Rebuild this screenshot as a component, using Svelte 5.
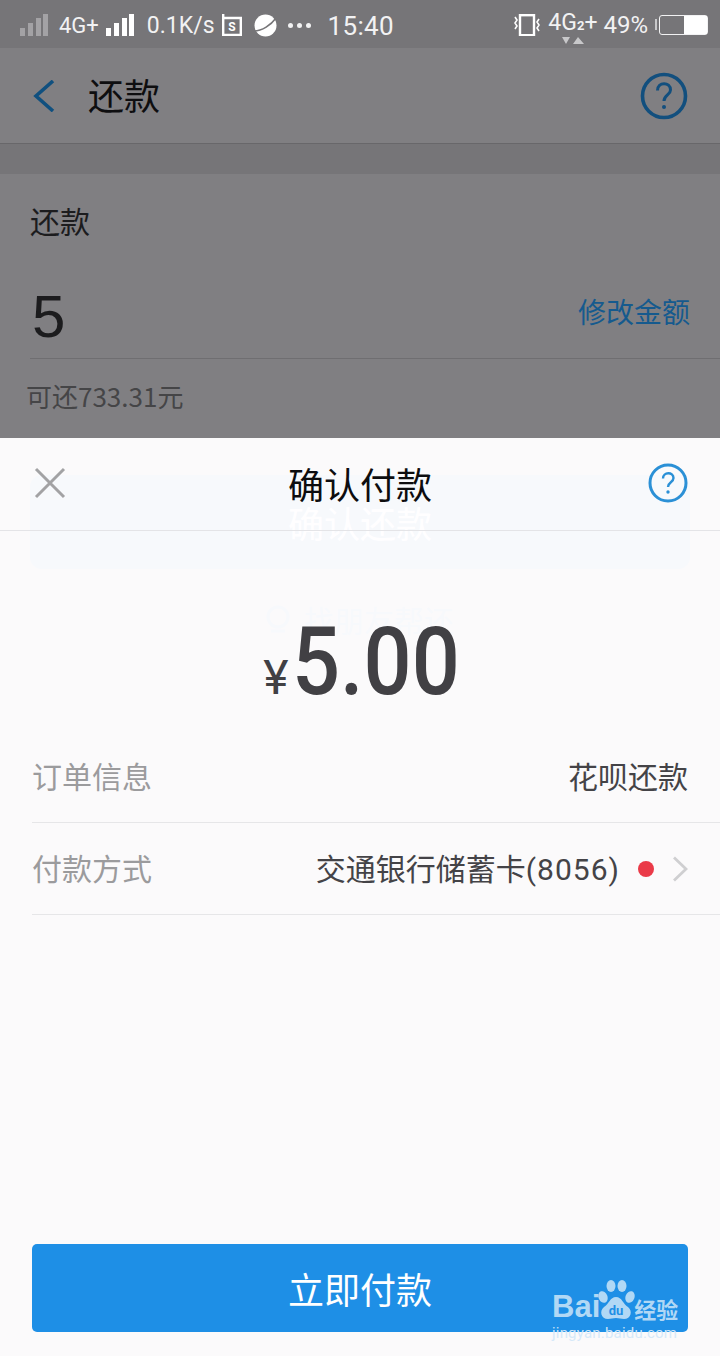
<script lang="ts">
	const rows = [
		{ label: '订单信息', value: '花呗还款', tail: '', pay: false },
		{ label: '付款方式', value: '交通银行储蓄卡', tail: '(8056)', pay: true }
	];
</script>

<div class="screen">
	<!-- dimmed page under the sheet -->
	<div class="page">
		<header class="status">
			<svg class="bars" width="28" height="22" viewBox="0 0 28 22" fill="#a3a2a5">
				<rect x="0" y="14" width="5" height="8" /><rect x="8" y="9" width="5" height="13" /><rect x="16" y="4" width="5" height="18" /><rect x="23" y="0" width="5" height="22" />
			</svg>
			<span class="net">4G+</span>
			<svg class="bars2" width="28" height="22" viewBox="0 0 28 22" fill="#fff">
				<rect x="0" y="14" width="5" height="8" /><rect x="8" y="9" width="5" height="13" /><rect x="16" y="4" width="5" height="18" /><rect x="23" y="0" width="5" height="22" />
			</svg>
			<span class="speed">0.1K/s</span>
			<svg class="sim" width="20" height="22" viewBox="0 0 20 22" fill="none" stroke="#fff" stroke-width="2.4">
				<path d="M1.2 0v21h17.6V4H1.2" />
				<text x="10" y="17" text-anchor="middle" font-size="12" font-family="Roboto, sans-serif" font-weight="700" fill="#fff" stroke="none">S</text>
			</svg>
			<svg class="planet" width="23" height="23" viewBox="0 0 23 23">
				<circle cx="11.5" cy="11.5" r="11" fill="#fff" />
				<path d="M0 17C8 17 17 11 22 4" fill="none" stroke="#767578" stroke-width="1.6" />
			</svg>
			<span class="dots"><i></i><i></i><i></i></span>
			<span class="clock">15:40</span>
			<div class="status-right">
				<svg width="28" height="22" viewBox="0 0 28 22" fill="none" stroke="#fff">
					<rect x="7" y="1.2" width="14" height="20" stroke-width="2.4" />
					<path d="M2 3l2 3-2 3 2 3-2 3 M26 5l-2 3 2 3-2 3 2 3" stroke-width="1.6" />
				</svg>
				<span class="dual">4G<small>2</small>+
					<svg class="arrows" width="24" height="7" viewBox="0 0 24 7" fill="#c8c8ca"><path d="M0 0h8L4 7zM11 7l5-7 6 7z" /></svg>
				</span>
				<span class="pct">49%</span>
				<span class="battery"><b></b></span>
			</div>
		</header>

		<nav class="topbar">
			<svg width="22" height="32" viewBox="0 0 22 32" fill="none" stroke="#10507f" stroke-width="3.6">
				<path d="M20 1L3 16l17 15" />
			</svg>
			<h1>还款</h1>
			<svg class="help" width="48" height="48" viewBox="0 0 48 48" fill="none" stroke="#124f7e" stroke-width="3.6">
				<circle cx="24" cy="24" r="21.5" />
				<path d="M17.5 18.5c0-9 13-9 13-.5 0 5-6.500 5-6.500 11" stroke-width="3" />
				<circle cx="24" cy="35" r="2" fill="#124f7e" stroke="none" />
			</svg>
		</nav>

		<section class="repay">
			<div class="repay-label">还款</div>
			<div class="amount-row">
				<span class="amount-num">5</span>
				<span class="edit">修改金额</span>
			</div>
			<div class="limit">可还733.31元</div>
			<div class="confirm">确认还款</div>
			<div class="friend">
				<svg width="24" height="28" viewBox="0 0 24 28" fill="none" stroke="#005ca8" stroke-width="3">
					<circle cx="12" cy="12" r="10" /><path d="M5 26h14" />
				</svg>
				<span>找朋友帮还</span>
			</div>
		</section>
	</div>

	<!-- payment sheet -->
	<div class="sheet">
		<div class="sheet-head">
			<svg class="close" width="32" height="32" viewBox="0 0 32 32" stroke="#a2a2a4" stroke-width="3" fill="none">
				<path d="M2 2l28 28M30 2L2 30" />
			</svg>
			<h2>确认付款</h2>
			<svg class="q" width="40" height="40" viewBox="0 0 40 40" fill="none" stroke="#2b90d6" stroke-width="3">
				<circle cx="20" cy="20" r="18" />
				<path d="M15 15.500c0-7 10.500-7 10.500-.5 0 4.500-5.500 4-5.500 9" stroke-width="2.400" />
				<circle cx="20" cy="29" r="1.700" fill="#2b90d6" stroke="none" />
			</svg>
		</div>

		<div class="price">
			<span class="yen">¥</span><span class="total">5.00</span>
		</div>

		<div class="rows">
			{#each rows as row}
				<div class="row">
					<span class="row-label">{row.label}</span>
					<span class="row-value">{row.value}<span class="tail">{row.tail}</span></span>
					{#if row.pay}
						<span class="dot"></span>
						<svg class="chev" width="16" height="26" viewBox="0 0 16 26" fill="none" stroke="#cfcfd1" stroke-width="2.800">
							<path d="M2 1.500L14 13 2 24.500" />
						</svg>
					{/if}
				</div>
			{/each}
		</div>

		<div class="foot">
			<button class="pay">立即付款</button>
		</div>
	</div>

	<!-- baidu jingyan watermark -->
	<div class="mark">
		<div class="mark-top">
			<span class="bai">Bai</span>
			<svg width="38" height="44" viewBox="0 0 38 44" fill="#b9dcf6">
				<ellipse cx="6" cy="18" rx="4.500" ry="6" transform="rotate(-20 6 18)" />
				<ellipse cx="14" cy="7" rx="4.500" ry="6" />
				<ellipse cx="25" cy="7" rx="4.500" ry="6" />
				<ellipse cx="33" cy="18" rx="4.500" ry="6" transform="rotate(20 33 18)" />
				<path d="M19 18c-6 0-7 7-12 10-5 4-3 12 4 12 3 0 5-1 8-1s5 1 8 1c7 0 9-8 4-12-5-3-6-10-12-10z" />
				<text x="19" y="36" text-anchor="middle" font-size="13" font-weight="700" font-family="Roboto, sans-serif" fill="#1e8fe6">du</text>
			</svg>
			<span class="jy">经验</span>
		</div>
		<div class="mark-url">jingyan.baidu.com</div>
	</div>
</div>

<style>
	:global(body) {
		margin: 0;
	}
	.screen {
		position: relative;
		width: 720px;
		height: 1356px;
		overflow: hidden;
		font-family: "Noto Sans CJK SC", Roboto, sans-serif;
		background: #807f82;
	}

	/* status bar */
	.status {
		height: 48px;
		box-sizing: border-box;
		padding: 2px 12px 0 20px;
		display: flex;
		align-items: center;
		background: #767578;
		color: #f2f2f3;
		font-family: Roboto, sans-serif;
	}
	.net {
		margin-left: 11px;
		font-size: 22px;
	}
	.bars2 {
		margin-left: 7px;
	}
	.speed {
		margin-left: 13px;
		font-size: 23px;
	}
	.sim {
		margin-left: 7px;
	}
	.planet {
		margin-left: 12px;
	}
	.dots {
		margin-left: 11px;
		display: flex;
		gap: 4px;
	}
	.dots i {
		width: 5px;
		height: 5px;
		border-radius: 50%;
		background: #f2f2f3;
	}
	.clock {
		margin-left: 17px;
		font-size: 26px;
		letter-spacing: 0.3px;
		padding-top: 2px;
	}
	.status-right {
		margin-left: auto;
		display: flex;
		align-items: center;
	}
	.dual {
		position: relative;
		margin-left: 7px;
		font-size: 23px;
		margin-top: -6px;
	}
	.dual small {
		font-size: 13px;
		font-weight: 700;
	}
	.arrows {
		position: absolute;
		left: 14px;
		top: 28px;
	}
	.pct {
		margin-left: 6px;
		font-size: 24px;
	}
	.battery {
		position: relative;
		margin-left: 11px;
		width: 49px;
		height: 20px;
		box-sizing: border-box;
		border: 1.500px solid #f2f2f3;
		border-radius: 3px;
		display: flex;
		justify-content: flex-end;
	}
	.battery::before {
		content: "";
		position: absolute;
		left: -5px;
		top: 3px;
		width: 2px;
		height: 11px;
		background: #c8c8ca;
	}
	.battery b {
		width: 23px;
		background: #fff;
	}

	/* page behind */
	.topbar {
		height: 96px;
		box-sizing: border-box;
		padding: 0 33px;
		display: flex;
		align-items: center;
		border-bottom: 1px solid #68676a;
	}
	.topbar h1 {
		margin: 0 0 4px 33px;
		font-size: 36px;
		font-weight: 400;
		color: #0e0e10;
	}
	.help {
		margin-left: auto;
		margin-right: -1px;
	}
	.repay {
		margin-top: 30px;
		padding: 0 30px;
		background: #807f82;
	}
	.topbar + .repay {
		box-shadow: 0 -30px 0 #767578;
	}
	.repay-label {
		padding-top: 26px;
		font-size: 30px;
		line-height: 40px;
		color: #1c1c1e;
	}
	.amount-row {
		margin-right: -30px;
		padding: 42px 30px 6px 2px;
		display: flex;
		align-items: center;
		justify-content: space-between;
		border-bottom: 1px solid #6f6e71;
	}
	.amount-num {
		font-family: "Liberation Sans", sans-serif;
		font-size: 60px;
		line-height: 70px;
		color: #1c1c1e;
	}
	.edit {
		font-size: 28px;
		color: #155a8e;
		margin-bottom: 12px;
	}
	.limit {
		margin: 17px 0 0 -4px;
		font-size: 26px;
		line-height: 40px;
		color: #454547;
	}
	.confirm {
		margin-top: 59px;
		height: 94px;
		border-radius: 12px;
		background: #005ca8;
		color: #fff;
		font-size: 36px;
		text-align: center;
		line-height: 94px;
	}
	.friend {
		margin-top: 30px;
		display: flex;
		justify-content: center;
		align-items: center;
		gap: 14px;
		font-size: 30px;
		line-height: 40px;
		color: #005ca8;
	}

	/* sheet */
	.sheet {
		position: absolute;
		inset: 438px 0 0 0;
		display: flex;
		flex-direction: column;
		background: rgba(255, 254, 255, 0.97);
	}
	.sheet-head {
		height: 93px;
		box-sizing: border-box;
		padding: 0 32px 0 34px;
		display: flex;
		align-items: center;
		justify-content: space-between;
		border-bottom: 1px solid #e4e4e7;
	}
	.close {
		margin-bottom: 2px;
	}
	.sheet-head h2 {
		margin: 0 0 2px 6px;
		font-size: 36px;
		font-weight: 400;
		color: #0d0d0f;
	}
	.q {
		margin-bottom: 2px;
	}
	.price {
		height: 123px;
		padding-top: 77px;
		padding-left: 4px;
		display: flex;
		justify-content: center;
		align-items: baseline;
		color: #414044;
		font-family: Roboto, sans-serif;
	}
	.yen {
		font-size: 48px;
		margin-right: 4px;
	}
	.total {
		font-size: 94px;
		font-weight: 500;
		line-height: 108px;
		display: inline-block;
		transform: scaleX(0.9);
		transform-origin: left center;
		margin-right: -18px;
	}
	.rows {
		padding-left: 32px;
	}
	.row {
		height: 92px;
		box-sizing: border-box;
		padding-right: 32px;
		display: flex;
		align-items: center;
		border-bottom: 1px solid #e6e6e8;
		font-size: 30px;
	}
	.row-label {
		color: #9b9b9d;
		margin-right: auto;
		margin-bottom: 3px;
	}
	.row-value {
		color: #444347;
		margin-bottom: 3px;
	}
	.tail {
		letter-spacing: 1px;
		font-family: Roboto, sans-serif;
	}
	.dot {
		width: 16px;
		height: 16px;
		margin: 0 18px 0 18px;
		border-radius: 50%;
		background: #ea3a48;
	}
	.foot {
		margin-top: auto;
		padding: 0 32px 24px;
	}
	.pay {
		display: block;
		width: 100%;
		height: 88px;
		padding: 0;
		border: none;
		border-radius: 5px;
		background: #1e8fe6;
		color: #fff;
		font: 400 36px "Noto Sans CJK SC", sans-serif;
	}

	/* watermark */
	.mark {
		position: absolute;
		left: 552px;
		top: 1279px;
		width: 130px;
		opacity: 0.95;
	}
	.mark-top {
		display: flex;
		align-items: flex-end;
		height: 44px;
		color: #b9dcf6;
		white-space: nowrap;
	}
	.mark-top svg {
		flex: none;
		margin-left: -4px;
		margin-right: -2px;
	}
	.bai {
		font: 700 31px/32px "Liberation Sans", sans-serif;
		margin-right: 1px;
	}
	.jy {
		margin-left: 1px;
		font-size: 22px;
		line-height: 30px;
		font-weight: 700;
	}
	.mark-url {
		font: 400 15px/18px Roboto, sans-serif;
		color: #d5e9f9;
		white-space: nowrap;
		margin-top: 1px;
		letter-spacing: 0.2px;
	}
</style>
